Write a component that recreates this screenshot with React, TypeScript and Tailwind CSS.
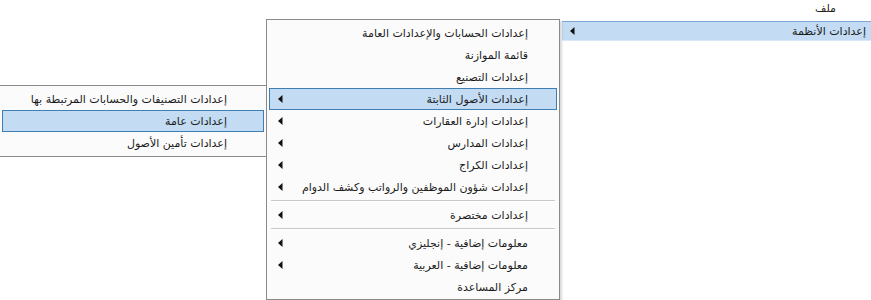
import React from 'react';

type Item = { label: string; arrow?: boolean; active?: boolean; sep?: boolean };

const mainItems: Item[] = [
  { label: 'إعدادات الحسابات والإعدادات العامة' },
  { label: 'قائمة الموازنة' },
  { label: 'إعدادات التصنيع' },
  { label: 'إعدادات الأصول الثابتة', arrow: true, active: true },
  { label: 'إعدادات إدارة العقارات', arrow: true },
  { label: 'إعدادات المدارس', arrow: true },
  { label: 'إعدادات الكراج', arrow: true },
  { label: 'إعدادات شؤون الموظفين والرواتب وكشف الدوام', arrow: true },
  { label: '', sep: true },
  { label: 'إعدادات مختصرة', arrow: true },
  { label: '', sep: true },
  { label: 'معلومات إضافية - إنجليزي', arrow: true },
  { label: 'معلومات إضافية - العربية', arrow: true },
  { label: 'مركز المساعدة' },
];

const subItems: Item[] = [
  { label: 'إعدادات التصنيفات والحسابات المرتبطة بها' },
  { label: 'إعدادات عامة', active: true },
  { label: 'إعدادات تأمين الأصول' },
];

const Arrow = () => (
  <svg width="5" height="8" viewBox="0 0 5 8" className="shrink-0">
    <path d="M4.5 0 L0 4 L4.5 8 Z" fill="#111" />
  </svg>
);

const MenuRow: React.FC<{ item: Item; padRight: string }> = ({ item, padRight }) => {
  if (item.sep) {
    return (
      <div className="h-[6px] flex flex-col justify-center px-[2px]">
        <div className="h-px bg-[#c9c9c9]" />
        <div className="h-px bg-white" />
      </div>
    );
  }
  return (
    <div
      className={`h-[22px] flex items-center justify-between pl-[8px] ${padRight} border ${
        item.active ? 'bg-[#c3dcf4] border-[#3f7eb3]' : 'border-transparent'
      }`}
    >
      <span className="whitespace-nowrap text-[#1b1b1b]">{item.label}</span>
      {item.arrow ? <Arrow /> : <span />}
    </div>
  );
};

export default function App() {
  return (
    <div
      dir="rtl"
      className="relative h-[300px] w-[871px] overflow-hidden bg-white text-[11px] leading-none"
      style={{ fontFamily: '"DejaVu Sans", "Liberation Sans", sans-serif' }}
    >
      <div className="h-[21px] pr-[35px] pt-[3px] text-[#1b1b1b]">ملف</div>
      <div className="w-[309px] h-[20px] flex items-center justify-between pr-[5px] pl-[8px] bg-[#c3dcf4] border-t border-[#7fa9d3] border-b border-b-[#d9e8f7]">
        <span className="text-[#1b1b1b]">إعدادات الأنظمة</span>
        <Arrow />
      </div>

      {/* main dropdown */}
      <div className="absolute top-[19px] right-[311px] w-[294px] h-[281px] bg-[#fbfbfb] border border-[#8a8a8a] p-[2px] shadow-[2px_2px_2px_rgba(0,0,0,0.15)]">
        {mainItems.map((it, i) => (
          <MenuRow key={i} item={it} padRight="pr-[28px]" />
        ))}
      </div>

      {/* sub menu */}
      <div className="absolute top-[85px] right-[604px] w-[268px] bg-[#fbfbfb] border border-[#8a8a8a] p-[2px]">
        {subItems.map((it, i) => (
          <MenuRow key={i} item={it} padRight="pr-[36px]" />
        ))}
      </div>
    </div>
  );
}
